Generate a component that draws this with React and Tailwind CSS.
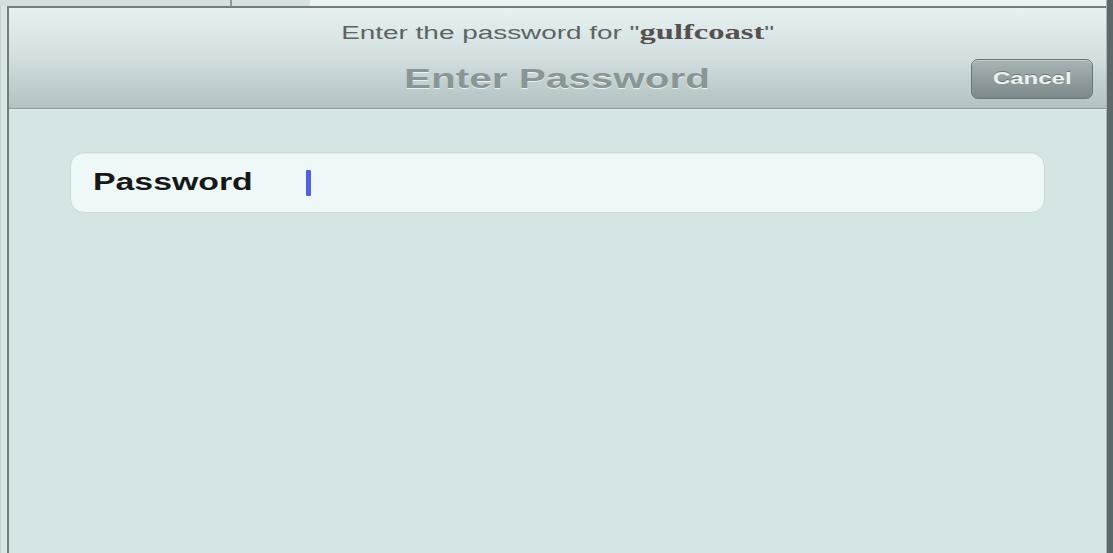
export default function App() {
  return (
    <div className="w-[1113px] h-[553px] flex overflow-hidden bg-[#dbe6e6] font-['Liberation_Sans',Arial,sans-serif]">
      <div className="w-[7px] flex flex-col">
        <div className="h-[6px] bg-[#d3dfdf]" />
        <div className="flex-1 bg-[#dae5e5] border-l border-[#c3cfcf]" />
      </div>
      <div className="flex-1 flex flex-col">
        <div className="h-[6px] flex">
          <div className="w-[223px] bg-[#d3dfdf]" />
          <div className="w-[2px] bg-[#8d9898]" />
          <div className="w-[78px] bg-[#d6e1e1]" />
          <div className="flex-1 bg-[#edf3f3]" />
        </div>
        <div className="flex-1 flex flex-col border-l-2 border-t-2 border-[#717d7e]">
          <div className="h-[101px] flex flex-col px-[13px] pt-[14px] bg-gradient-to-b from-[#e7f1f1] via-[#d2dedf] to-[#b3c1c3] border-b border-[#8b9899]">
            <div className="h-[20px] flex items-center justify-center">
              <span className="inline-block scale-x-[1.55] text-[18px] leading-[20px] text-[#5c6464] whitespace-nowrap">
                Enter the password for "
                <span className="font-['Liberation_Serif',Times,serif] font-bold text-[21px] text-[#565050]">gulfcoast</span>
                "
              </span>
            </div>
            <div className="mt-[17px] h-[40px] grid grid-cols-[1fr_auto_1fr] items-center">
              <div />
              <div className="flex items-center justify-center">
                <span className="inline-block scale-x-150 text-[27px] font-bold text-[#8a9595] [text-shadow:0_1px_0_rgba(255,255,255,0.7)] whitespace-nowrap">
                  Enter Password
                </span>
              </div>
              <div className="flex justify-end">
                <button className="w-[122px] h-[40px] rounded-[7px] border border-[#6a7678] bg-gradient-to-b from-[#a9b4b6] to-[#7c888a] shadow-[inset_0_1px_0_rgba(255,255,255,0.35)] flex items-center justify-center">
                  <span className="inline-block scale-x-150 text-[16px] font-bold text-[#eef2f2] [text-shadow:0_-1px_0_rgba(0,0,0,0.3)]">
                    Cancel
                  </span>
                </button>
              </div>
            </div>
          </div>
          <div className="h-[1px] bg-[#e4eded]" />
          <div className="flex-1 bg-[#d5e4e4] px-[61px] pt-[42px]">
            <div className="h-[61px] rounded-[14px] bg-[#eff8f8] border border-[#cbd9d9] shadow-[inset_0_1px_1px_rgba(0,0,0,0.06)] flex items-center pl-[22px]">
              <div className="w-[213px]">
                <span className="inline-block origin-left scale-x-[1.47] text-[23px] font-bold text-[#161818]">
                  Password
                </span>
              </div>
              <div className="w-[5px] h-[26px] bg-[#4f5fe0] rounded-[1px]" />
            </div>
          </div>
        </div>
      </div>
      <div className="w-[7px] flex">
        <div className="w-[1px] bg-[#a9b6b7]" />
        <div className="flex-1 bg-[#5c6869]" />
      </div>
    </div>
  );
}
